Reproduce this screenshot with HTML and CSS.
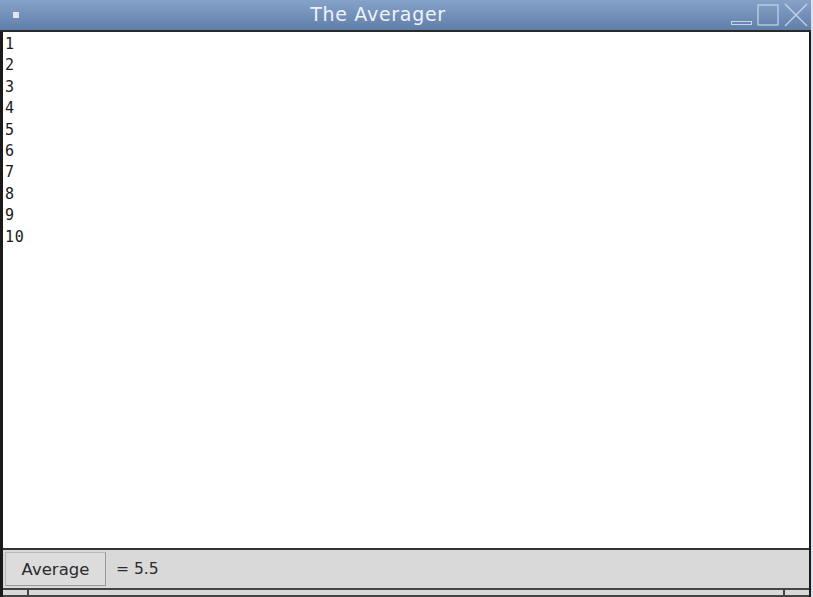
FILE: index.html
```html
<!DOCTYPE html>
<html>
<head>
<meta charset="utf-8">
<link rel="stylesheet" href="styles.css">
</head>
<body>
<div class="window">
  <div class="titlebar">
    <div class="menu-btn"></div>
    <div class="title">The Averager</div>
    <div class="controls">
      <svg width="80" height="26" viewBox="0 0 80 26">
        <rect x="1.5" y="19.5" width="20" height="3" fill="none" stroke="#c9d6e8" stroke-width="1"/>
        <rect x="28" y="3" width="20" height="20" fill="none" stroke="#c9d6e8" stroke-width="1.2"/>
        <path d="M55 2 L77 24 M77 2 L55 24" stroke="#c9d6e8" stroke-width="1.2"/>
      </svg>
    </div>
  </div>
  <div class="body">
    <div class="textarea">
      <div>1</div><div>2</div><div>3</div><div>4</div><div>5</div>
      <div>6</div><div>7</div><div>8</div><div>9</div><div>10</div>
    </div>
    <div class="panel">
      <button class="btn">Average</button>
      <span class="result">= 5.5</span>
    </div>
    <div class="frame-bottom">
      <div class="seg seg-l"></div>
      <div class="seg seg-m"></div>
      <div class="seg seg-r"></div>
    </div>
  </div>
</div>
</body>
</html>
```
FILE: styles.css
```css
html, body {
  margin: 0;
  padding: 0;
  background: #dfe3ef;
}
.window {
  width: 811px;
  height: 597px;
  display: flex;
  flex-direction: column;
  font-family: "DejaVu Sans", sans-serif;
}
.titlebar {
  height: 30px;
  background: linear-gradient(#86a2c9, #5f7ea9);
  border-bottom: 2px solid #2a2a2a;
  display: flex;
  align-items: center;
  position: relative;
}
.menu-btn {
  width: 6px;
  height: 6px;
  background: #e4e4ee;
  margin-left: 13px;
}
.title {
  position: absolute;
  left: 0;
  right: 0;
  top: 3px;
  text-align: center;
  color: #eef2f8;
  font-size: 19px;
  letter-spacing: 0.7px;
  margin-left: -55px;
}
.controls {
  margin-left: auto;
  margin-right: 1px;
  height: 26px;
}
.body {
  flex: 1;
  display: flex;
  flex-direction: column;
  border-left: 3px solid #1a1a1a;
  border-right: 2px solid #1a1a1a;
  background: #d9d9d9;
}
.textarea {
  flex: 1;
  background: #fff;
  font-family: "DejaVu Sans Mono", monospace;
  font-size: 15px;
  line-height: 21.4px;
  letter-spacing: 0.8px;
  color: #1a1a1a;
  padding: 2px 0 0 2px;
  border-bottom: 2px solid #333;
}
.panel {
  height: 38px;
  display: flex;
  align-items: center;
  padding-left: 2px;
  background: #d9d9d9;
}
.btn {
  width: 101px;
  height: 34px;
  background: #dcdcdc;
  border: 1px solid #b8b8b8;
  border-right-color: #9a9a9a;
  border-bottom-color: #9a9a9a;
  font-family: "DejaVu Sans", sans-serif;
  font-size: 16.5px;
  color: #2b2b2b;
  padding: 0;
}
.result {
  margin-left: 10px;
  font-size: 15.5px;
  color: #2b2b2b;
}
.frame-bottom {
  height: 5px;
  display: flex;
  border-top: 2px solid #444;
  border-bottom: 2px solid #444;
  background: #d9d9d9;
}
.seg { height: 100%; }
.seg-l { width: 24px; border-right: 2px solid #444; }
.seg-m { flex: 1; border-right: 2px solid #444; }
.seg-r { width: 24px; }
```
